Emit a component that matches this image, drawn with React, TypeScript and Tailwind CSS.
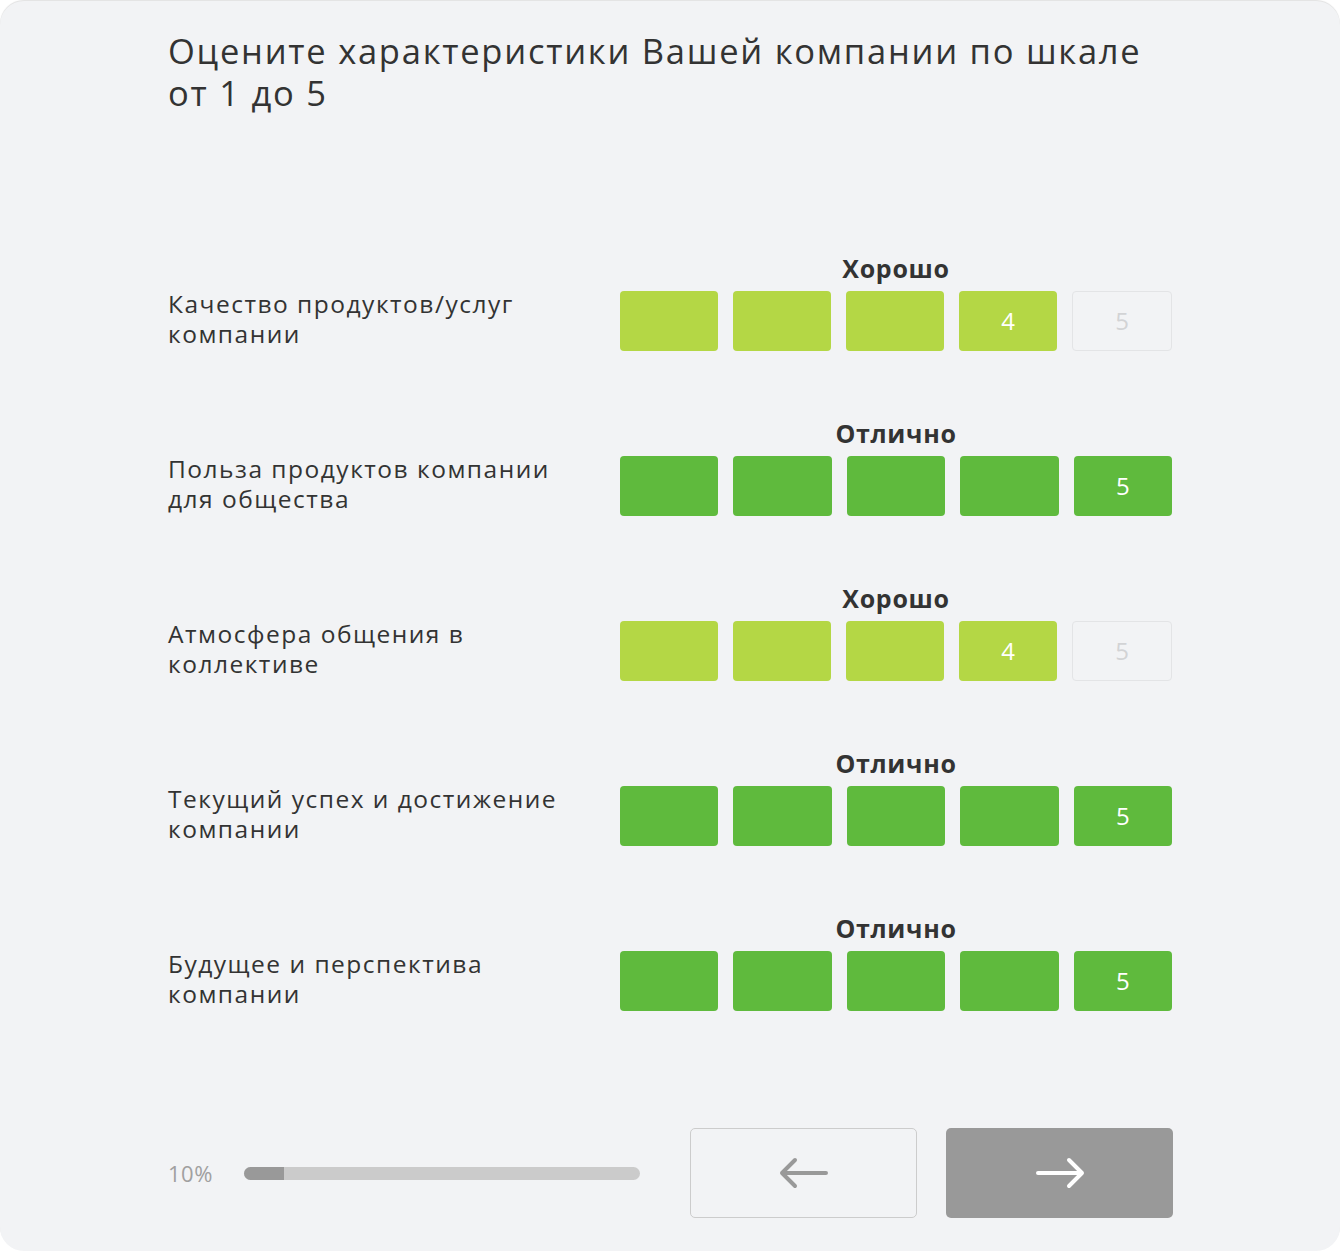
import React from "react";

const rows = [
  { label: ["Качество продуктов/услуг", "компании"], value: 4 },
  { label: ["Польза продуктов компании", "для общества"], value: 5 },
  { label: ["Атмосфера общения в", "коллективе"], value: 4 },
  { label: ["Текущий успех и достижение", "компании"], value: 5 },
  { label: ["Будущее и перспектива", "компании"], value: 5 },
];

const font = { fontFamily: "'Open Sans', 'Noto Sans', sans-serif" };

function Box({ idx, value }: { idx: number; value: number }) {
  const filled = idx <= value;
  const color = value === 5 ? "bg-[#5fba3d]" : "bg-[#b4d745]";
  const showNum = idx === value;
  if (!filled) {
    return (
      <div className="flex-1 h-[60px] rounded-[4px] border border-[#e3e4e6] flex items-center justify-center text-[24px] text-[#d2d3d5]">
        {idx}
      </div>
    );
  }
  return (
    <div className={`flex-1 h-[60px] rounded-[4px] ${color} flex items-center justify-center text-[24px] text-white`}>
      {showNum ? idx : ""}
    </div>
  );
}

export default function App() {
  return (
    <div className="min-h-screen bg-white" style={font}>
      <div className="w-[1340px] h-[1250px] mt-px rounded-[24px] bg-[#f2f3f5] shadow-[0_-1px_1px_rgba(0,0,0,0.12)] flex flex-col px-[168px]">
        <h1 className="pt-[29px] text-[34.5px] leading-[42px] text-[#333] tracking-[1.75px] font-normal whitespace-nowrap">
          <div>Оцените характеристики Вашей компании по шкале</div>
          <div>от 1 до 5</div>
        </h1>
        <div className="mt-[140px] flex flex-col gap-[68px]">
          {rows.map((r, i) => (
            <div key={i} className="flex items-end">
              <div className="w-[452px] h-[60px] flex flex-col justify-center text-[24.5px] leading-[30px] text-[#333] tracking-[1.5px]">
                <div className="-translate-y-[2px]">{r.label[0]}</div>
                <div className="-translate-y-[2px]">{r.label[1]}</div>
              </div>
              <div className="w-[552px] flex flex-col">
                <div className="h-[28px] mb-[9px] text-center text-[25px] leading-[28px] font-bold text-[#333] tracking-[0.7px]">
                  {r.value === 5 ? "Отлично" : "Хорошо"}
                </div>
                <div className="flex gap-[15px]">
                  {[1, 2, 3, 4, 5].map((n) => (
                    <Box key={n} idx={n} value={r.value} />
                  ))}
                </div>
              </div>
            </div>
          ))}
        </div>
        <div className="mt-auto mb-[33px] flex items-center w-[1006px]">
          <div className="w-[76px] shrink-0 text-[22px] text-[#a0a0a0] tracking-[0.5px]">10%</div>
          <div className="w-[396px] shrink-0 h-[13px] rounded-full bg-[#cbcbcb] overflow-hidden">
            <div className="w-[40px] h-full bg-[#999999]" />
          </div>
          <button className="ml-[50px] w-[227px] h-[90px] shrink-0 rounded-[5px] border border-[#cccccc] flex items-center justify-center">
            <svg width="50" height="32" viewBox="0 0 50 32" fill="none">
              <path d="M47 16H3M16 3L3 16L16 29" stroke="#999999" strokeWidth="4" strokeLinecap="round" strokeLinejoin="round" />
            </svg>
          </button>
          <button className="ml-[29px] w-[227px] h-[90px] shrink-0 rounded-[5px] bg-[#999999] flex items-center justify-center">
            <svg width="50" height="32" viewBox="0 0 50 32" fill="none">
              <path d="M3 16H47M34 3L47 16L34 29" stroke="#ffffff" strokeWidth="4" strokeLinecap="round" strokeLinejoin="round" />
            </svg>
          </button>
        </div>
      </div>
    </div>
  );
}
